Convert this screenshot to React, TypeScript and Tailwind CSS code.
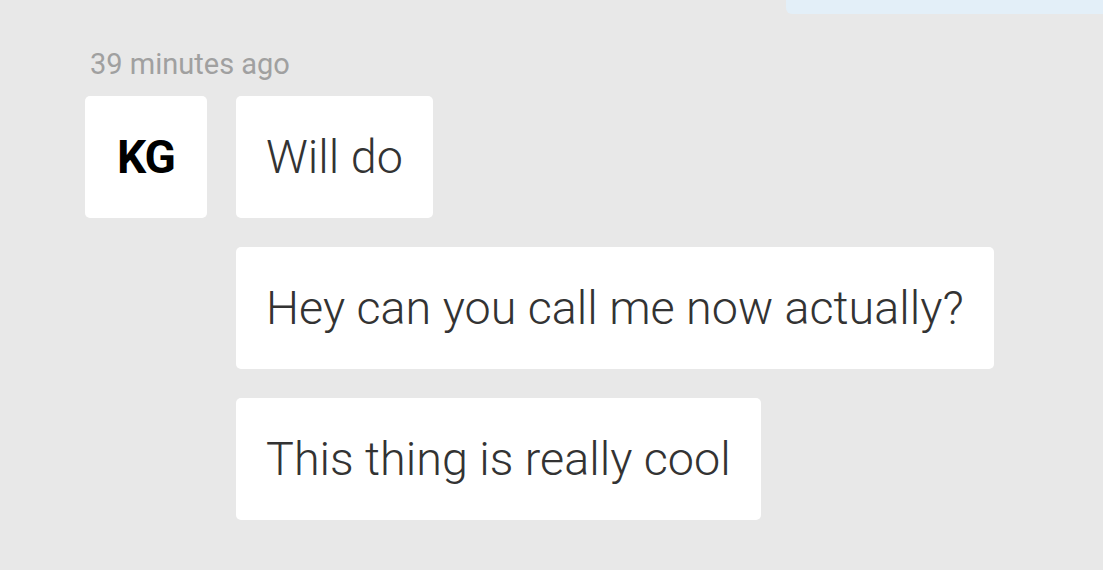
import * as React from "react";

const messages = ["Will do", "Hey can you call me now actually?", "This thing is really cool"];

export default function App() {
  return (
    <div
      className="relative h-[570px] w-[1103px] overflow-hidden bg-[#e8e8e8]"
      style={{ fontFamily: "Roboto, 'Noto Sans', sans-serif" }}
    >
      {/* tail of the previous (outgoing) message */}
      <div className="absolute right-0 top-0 h-[14px] w-[317px] rounded-bl-[6px] bg-[#e3eff8]" />

      <div className="pl-[85px] pt-[46px]">
        <div className="pl-[5px] text-[29px] leading-[36px] font-normal text-[#a0a0a0]">39 minutes ago</div>

        <div className="mt-[14px] flex gap-[29px]">
          <div className="flex h-[122px] w-[122px] shrink-0 items-center justify-center rounded-[5px] bg-white">
            <span className="text-[46px] font-bold tracking-[-1px] text-black">KG</span>
          </div>

          <div className="flex flex-col items-start gap-[29px]">
            {messages.map((m) => (
              <div
                key={m}
                className="flex h-[122px] items-center rounded-[5px] bg-white px-[30px] text-[46.7px] font-light text-[#333]"
              >
                {m}
              </div>
            ))}
          </div>
        </div>
      </div>
    </div>
  );
}
